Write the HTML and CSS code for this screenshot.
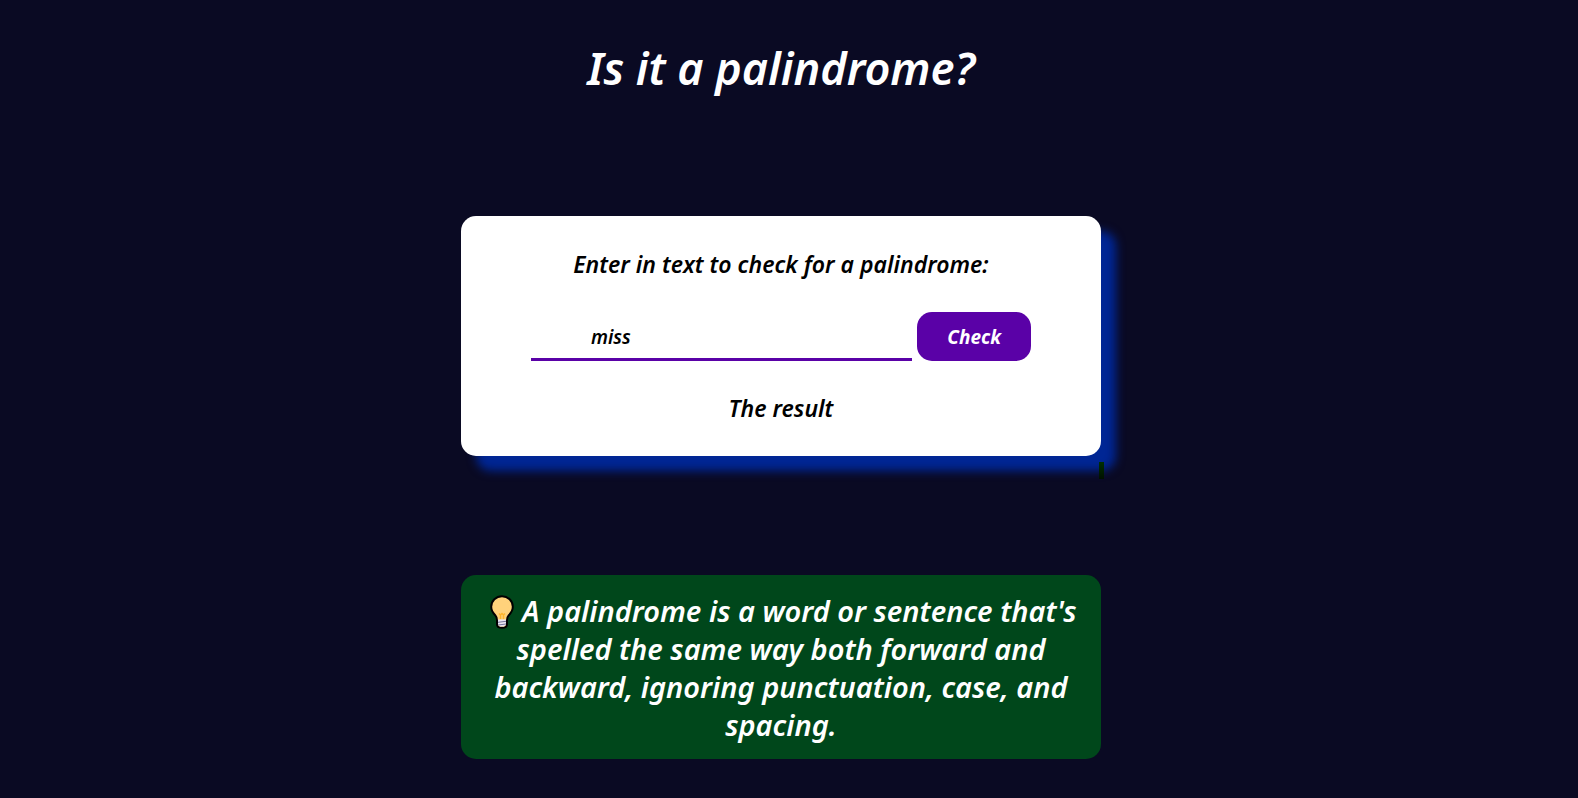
FILE: index.html
```html
<!DOCTYPE html>
<html lang="en">
<head>
<meta charset="utf-8">
<title>Is it a palindrome?</title>
<link rel="stylesheet" href="styles.css">
</head>
<body>
<main class="page">
  <h1 class="title">Is it a palindrome?</h1>
  <form class="card">
    <label class="card-text" for="text-input">Enter in text to check for a palindrome:</label>
    <div class="controls">
      <input class="text-input" id="text-input" type="text" value="miss">
      <button class="check-button" type="button">Check</button>
    </div>
    <output class="card-text" for="text-input">The result</output>
    <span class="marker"></span>
  </form>
  <p class="definition">
    <svg class="bulb" viewBox="0 0 24 34" aria-hidden="true">
      <path d="M12 1.200C6 1.200 1.200 5.900 1.200 11.800c0 3.800 2 6.400 4 8.400 1.500 1.700 1.800 3 1.800 5v4c0 2.300 2 3.600 5 3.600s5-1.300 5-3.600v-4c0-2 .3-3.300 1.800-5 2-2 4-4.600 4-8.400C22.800 5.900 18 1.200 12 1.200z" fill="#ffd27b" stroke="#000" stroke-width="2"/>
      <path d="M9 18.500l1.500 1.500 1.500-1.500 1.500 1.500 1.500-1.500M10.500 20v4M13.500 20v4" fill="none" stroke="#ffb52b" stroke-width="1.500"/>
      <path d="M8 24.500h8v5l-2 2h-4l-2-2z" fill="#e9e5f2"/>
      <path d="M8 27.300l8-1M8 30l8-1" stroke="#77749a" stroke-width="1"/>
    </svg>
    A palindrome is a word or sentence that's spelled the same way both forward and backward, ignoring punctuation, case, and spacing.
  </p>
</main>
</body>
</html>
```
FILE: styles.css
```css
* { box-sizing: border-box; }
body {
  margin: 0;
  min-height: 100vh;
  background: #0a0a23;
  color: #fff;
  font-family: "Noto Sans", "Open Sans", sans-serif;
  font-style: italic;
  font-weight: 600;
}
.page {
  display: flex;
  flex-direction: column;
  align-items: center;
  padding: 39px 16px 39px 0;
}
.title {
  margin: 0 0 120px;
  font-size: 45px;
  line-height: 57px;
  font-weight: 600;
}
.card {
  position: relative;
  width: 100%;
  max-width: 640px;
  padding: 32px 70px;
  border-radius: 15px;
  background: #fff;
  color: #000;
  box-shadow: 15px 15px 10px #002694;
  display: flex;
  flex-direction: column;
  align-items: center;
}
.card-text { font-size: 23px; line-height: 32px; }
.controls {
  display: flex;
  align-self: stretch;
  gap: 5px;
  margin: 32px 0 31px;
}
.text-input {
  flex: 1;
  min-width: 0;
  height: 49px;
  padding: 3px 60px 0;
  border: 0;
  border-bottom: 3px solid #5a01a7;
  background: transparent;
  color: #000;
  font: inherit;
  font-size: 19px;
  outline: 0;
}
.check-button {
  padding: 0 30px;
  border: 0;
  border-radius: 15px;
  background: #5a01a7;
  color: #fff;
  font: inherit;
  font-size: 19px;
  font-weight: 700;
}
.marker {
  position: absolute;
  right: -3px;
  bottom: -23px;
  width: 5px;
  height: 17px;
  background: linear-gradient(#003000, #001000);
}
.definition {
  width: 100%;
  max-width: 640px;
  margin: 119px 0 0;
  padding: 17px 20px 15px;
  border-radius: 15px;
  background: #00471b;
  font-size: 29px;
  line-height: 38px;
  text-align: center;
}
.bulb { width: 24px; height: 34px; margin: 0 1px 0 4px; vertical-align: -7px; }
```
